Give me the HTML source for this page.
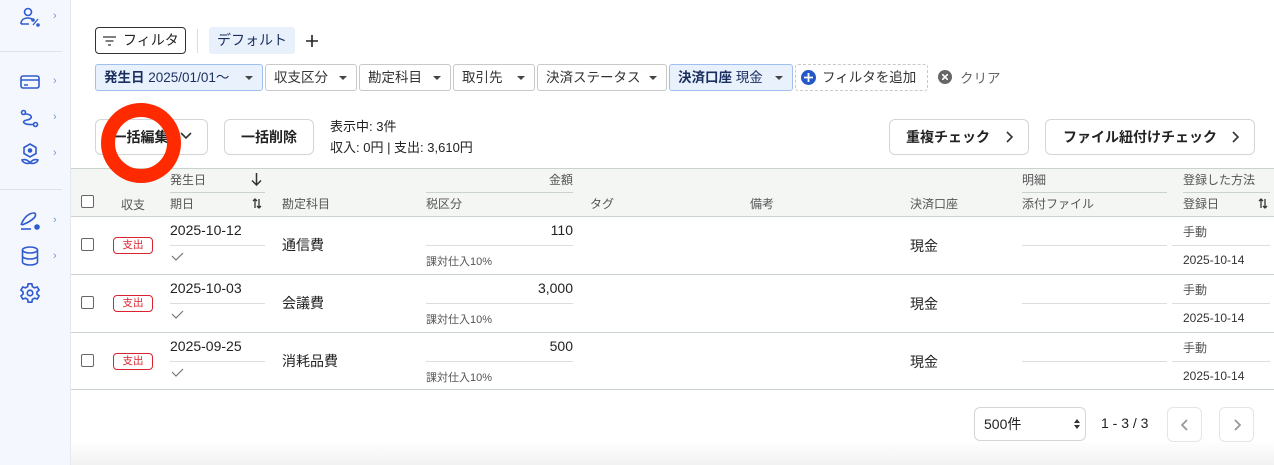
<!DOCTYPE html>
<html><head><meta charset="utf-8"><style>
*{box-sizing:border-box;margin:0;padding:0}
body{width:1274px;height:465px;overflow:hidden;background:#fff;font-family:"Liberation Sans","Noto Sans CJK JP",sans-serif;color:#222;position:relative;font-size:13px}
.a{position:absolute}
.side{left:0;top:0;width:71px;height:465px;background:#f4f7fd;border-right:1px solid #e3e8f0}
.hr{height:1px;background:#dde3ec;left:0;width:62px}
.chev{color:#7a93c9;font-size:11px;left:53px}
.chip{position:absolute;top:64px;height:27px;border:1px solid #c9c9c9;border-radius:3px;font-size:13.5px;line-height:25px;padding-left:8px;color:#333;background:#fff}
.chip.b{background:#e9f1fd;border-color:#9fc0ef;color:#1b2f5e}
.tri{position:absolute;right:9px;top:11px;border-left:4px solid transparent;border-right:4px solid transparent;border-top:4px solid #444}
.btn{position:absolute;border:1px solid #d5d5d5;border-radius:6px;background:#fff;font-weight:bold;font-size:14px;text-align:center}
.th{font-size:12px;color:#555}
.cb{width:13px;height:13px;border:1.5px solid #666;border-radius:2px;background:#fff}
.tag{width:40px;height:17px;border:1px solid #d9232e;border-radius:4px;color:#d9232e;font-size:10.5px;text-align:center;line-height:15px}
.ln{height:1px;background:#ddd}
.row{font-size:14px}
.sm{font-size:11px;color:#555}
</style></head><body>
<div class="a side">
 <svg class="a" style="left:19px;top:7px" width="24" height="22" viewBox="0 0 24 22" fill="none" stroke="#2f5bd0" stroke-width="1.6"><circle cx="9" cy="5" r="3.5"/><path d="M2 17c0-4 3-6 7-6 2 0 3 .5 4 1M2 17h8"/><path d="M14 18l5-6" stroke-width="1.3"/><circle cx="14" cy="13" r="1"/><circle cx="19" cy="18" r="1"/></svg>
 <div class="a chev" style="top:10px">›</div>
 <div class="a hr" style="top:51px"></div>
 <svg class="a" style="left:20px;top:74px" width="20" height="16" viewBox="0 0 20 16" fill="none" stroke="#2f5bd0" stroke-width="1.6"><rect x="1" y="2" width="18" height="12" rx="2"/><path d="M1 6h18M4 11h4"/></svg>
 <div class="a chev" style="top:75px">›</div>
 <svg class="a" style="left:20px;top:109px" width="20" height="20" viewBox="0 0 20 20" fill="none" stroke="#2f5bd0" stroke-width="1.6"><circle cx="3.5" cy="3.5" r="2"/><circle cx="15.5" cy="15.5" r="2"/><path d="M5 5c8 0 8 5 2 6s-4 5 6 4.5"/></svg>
 <div class="a chev" style="top:111px">›</div>
 <svg class="a" style="left:20px;top:143px" width="20" height="22" viewBox="0 0 20 22" fill="none" stroke="#2f5bd0" stroke-width="1.6"><path d="M10 1l6 3.5v6L10 14l-6-3.5v-6z"/><circle cx="10" cy="7.5" r="1.5" fill="#2f5bd0"/><path d="M10 20c-2-3-5-4-8-3 1 3 5 4 8 3zM10 20c2-3 5-4 8-3-1 3-5 4-8 3z"/></svg>
 <div class="a chev" style="top:147px">›</div>
 <div class="a hr" style="top:189px"></div>
 <svg class="a" style="left:19px;top:210px" width="24" height="22" viewBox="0 0 24 22" fill="none" stroke="#2f5bd0" stroke-width="1.6"><path d="M2 15c3-8 8-12 13-12 2 0 2 3 0 5-3 3-7 5-12 7"/><path d="M2 19h10"/><circle cx="18" cy="17" r="2" fill="#2f5bd0"/></svg>
 <div class="a chev" style="top:214px">›</div>
 <svg class="a" style="left:21px;top:246px" width="18" height="20" viewBox="0 0 18 20" fill="none" stroke="#2f5bd0" stroke-width="1.6"><ellipse cx="9" cy="4" rx="7.5" ry="3"/><path d="M1.5 4v12c0 1.7 3.4 3 7.5 3s7.5-1.3 7.5-3V4M1.5 10c0 1.7 3.4 3 7.5 3s7.5-1.3 7.5-3"/></svg>
 <div class="a chev" style="top:250px">›</div>
 <svg class="a" style="left:19px;top:282px" width="22" height="22" viewBox="0 0 24 24" fill="none" stroke="#2f5bd0" stroke-width="1.8"><circle cx="12" cy="12" r="3"/><path d="M10 2h4l.6 3 2.4 1.4 2.9-1 2 3.4-2.3 2v2.4l2.3 2-2 3.4-2.9-1L14.6 19l-.6 3h-4l-.6-3L7 17.6l-2.9 1-2-3.4 2.3-2v-2.4l-2.3-2 2-3.4 2.9 1L9.4 5z"/></svg>
</div>

<div class="a" style="left:95px;top:27px;width:91px;height:27px;border:1px solid #333;border-radius:4px;font-size:14px;line-height:25px;padding-left:27px">フィルタ</div>
<svg class="a" style="left:103px;top:36px" width="13" height="10" fill="none" stroke="#333" stroke-width="1.3"><path d="M0 1h13M2.5 5h8M5 9h3"/></svg>
<div class="a" style="left:197px;top:29px;width:1px;height:24px;background:#ddd"></div>
<div class="a" style="left:209px;top:27px;width:86px;height:27px;background:#e8f0fb;border-radius:3px;font-size:14px;line-height:27px;text-align:center;color:#1b2f5e">デフォルト</div>
<svg class="a" style="left:306px;top:35px" width="12" height="12" stroke="#222" stroke-width="1.6"><path d="M6 0v12M0 6h12"/></svg>

<div class="chip b" style="left:95px;width:168px;font-weight:bold">発生日 <span style="font-weight:normal">2025/01/01〜</span><i class="tri"></i></div>
<div class="chip" style="left:265px;width:92px">収支区分<i class="tri"></i></div>
<div class="chip" style="left:359px;width:92px">勘定科目<i class="tri"></i></div>
<div class="chip" style="left:453px;width:82px">取引先<i class="tri"></i></div>
<div class="chip" style="left:537px;width:130px">決済ステータス<i class="tri"></i></div>
<div class="chip b" style="left:669px;width:124px"><b>決済口座</b> 現金<i class="tri"></i></div>
<div class="chip" style="left:795px;width:133px;border-style:dashed;padding-left:26px">フィルタを追加</div>
<div class="a" style="left:801px;top:70px;width:15px;height:15px;border-radius:50%;background:#2458c6"></div>
<svg class="a" style="left:804px;top:73px" width="9" height="9" stroke="#fff" stroke-width="1.8"><path d="M4.5 0v9M0 4.5h9"/></svg>
<div class="a" style="left:938px;top:70px;width:14px;height:14px;border-radius:50%;background:#666"></div>
<svg class="a" style="left:942px;top:74px" width="6" height="6" stroke="#fff" stroke-width="1.6"><path d="M0 0l6 6M6 0L0 6"/></svg>
<div class="a" style="left:960px;top:67px;font-size:13.5px;color:#666">クリア</div>

<div class="btn" style="left:95px;top:119px;width:113px;height:36px;line-height:34px;padding-right:22px">一括編集</div>
<svg class="a" style="left:180px;top:132px" width="12" height="8" fill="none" stroke="#333" stroke-width="1.6"><path d="M1 1l5 5 5-5"/></svg>
<div class="btn" style="left:224px;top:119px;width:90px;height:36px;line-height:34px">一括削除</div>
<div class="a" style="left:330px;top:116px;font-size:13px;line-height:21px">表示中: 3件<br>収入: 0円 | 支出: 3,610円</div>
<div class="btn" style="left:889px;top:119px;width:140px;height:36px;line-height:34px;text-align:left;padding-left:16px">重複チェック</div>
<svg class="a" style="left:1006px;top:131px" width="7" height="12" fill="none" stroke="#333" stroke-width="1.6"><path d="M1 1l5 5-5 5"/></svg>
<div class="btn" style="left:1045px;top:119px;width:210px;height:36px;line-height:34px;text-align:left;padding-left:17px">ファイル紐付けチェック</div>
<svg class="a" style="left:1232px;top:131px" width="7" height="12" fill="none" stroke="#333" stroke-width="1.6"><path d="M1 1l5 5-5 5"/></svg>

<!-- table -->
<div class="a" style="left:71px;top:168px;width:1203px;height:49px;background:#f3f6f3;border-top:1px solid #c9d2cc;border-bottom:1px solid #c9d2cc"></div>
<div class="a cb" style="left:81px;top:195px"></div>
<div class="a th" style="left:121px;top:196px">収支</div>
<div class="a th" style="left:170px;top:171px">発生日</div>
<svg class="a" style="left:251px;top:173px" width="11" height="13" fill="none" stroke="#333" stroke-width="1.5"><path d="M5.5 0v12M1 7.5l4.5 4.5 4.5-4.5"/></svg>
<div class="a ln" style="left:170px;top:192px;width:95px;background:#c9d2cc"></div>
<div class="a th" style="left:170px;top:195px">期日</div>
<svg class="a" style="left:252px;top:198px" width="10" height="11" fill="none" stroke="#333" stroke-width="1.3"><path d="M3 10V1M1 3l2-2 2 2M7 1v9M5 8l2 2 2-2"/></svg>
<div class="a th" style="left:282px;top:195px">勘定科目</div>
<div class="a th" style="left:426px;top:171px;width:147px;text-align:right">金額</div>
<div class="a ln" style="left:426px;top:192px;width:147px;background:#c9d2cc"></div>
<div class="a th" style="left:426px;top:195px">税区分</div>
<div class="a th" style="left:590px;top:195px">タグ</div>
<div class="a th" style="left:750px;top:195px">備考</div>
<div class="a th" style="left:910px;top:195px">決済口座</div>
<div class="a th" style="left:1022px;top:171px">明細</div>
<div class="a ln" style="left:1022px;top:192px;width:145px;background:#c9d2cc"></div>
<div class="a th" style="left:1022px;top:195px">添付ファイル</div>
<div class="a th" style="left:1183px;top:171px">登録した方法</div>
<div class="a ln" style="left:1183px;top:192px;width:87px;background:#c9d2cc"></div>
<div class="a th" style="left:1183px;top:195px">登録日</div>
<svg class="a" style="left:1258px;top:198px" width="10" height="11" fill="none" stroke="#333" stroke-width="1.3"><path d="M3 10V1M1 3l2-2 2 2M7 1v9M5 8l2 2 2-2"/></svg>

<!-- rows -->
<div class="a" style="left:0;top:217px">
<div class="a" style="left:0;top:0;width:1274px">
<div class="a cb" style="left:81px;top:21px"></div>
<div class="a tag" style="left:113px;top:20px">支出</div>
<div class="a row" style="left:170px;top:5px">2025-10-12</div>
<div class="a ln" style="left:170px;top:28px;width:95px"></div>
<svg class="a" style="left:171px;top:35px" width="13" height="9" fill="none" stroke="#777" stroke-width="1.2"><path d="M1 4l4 4 7-7"/></svg>
<div class="a row" style="left:282px;top:18px">通信費</div>
<div class="a row" style="left:426px;top:5px;width:147px;text-align:right">110</div>
<div class="a ln" style="left:426px;top:28px;width:147px"></div>
<div class="a sm" style="left:426px;top:36px">課対仕入10%</div>
<div class="a row" style="left:910px;top:19px">現金</div>
<div class="a ln" style="left:1022px;top:28px;width:145px"></div>
<div class="a sm" style="left:1183px;top:6px;font-size:12px">手動</div>
<div class="a ln" style="left:1172px;top:28px;width:98px"></div>
<div class="a sm" style="left:1183px;top:36px;font-size:12px;color:#333">2025-10-14</div>
<div class="a ln" style="left:71px;top:57px;width:1203px;background:#c9d2cc"></div>
</div>
<div class="a" style="left:0;top:58px;width:1274px">
<div class="a cb" style="left:81px;top:21px"></div>
<div class="a tag" style="left:113px;top:20px">支出</div>
<div class="a row" style="left:170px;top:5px">2025-10-03</div>
<div class="a ln" style="left:170px;top:28px;width:95px"></div>
<svg class="a" style="left:171px;top:35px" width="13" height="9" fill="none" stroke="#777" stroke-width="1.2"><path d="M1 4l4 4 7-7"/></svg>
<div class="a row" style="left:282px;top:18px">会議費</div>
<div class="a row" style="left:426px;top:5px;width:147px;text-align:right">3,000</div>
<div class="a ln" style="left:426px;top:28px;width:147px"></div>
<div class="a sm" style="left:426px;top:36px">課対仕入10%</div>
<div class="a row" style="left:910px;top:19px">現金</div>
<div class="a ln" style="left:1022px;top:28px;width:145px"></div>
<div class="a sm" style="left:1183px;top:6px;font-size:12px">手動</div>
<div class="a ln" style="left:1172px;top:28px;width:98px"></div>
<div class="a sm" style="left:1183px;top:36px;font-size:12px;color:#333">2025-10-14</div>
<div class="a ln" style="left:71px;top:57px;width:1203px;background:#c9d2cc"></div>
</div>
<div class="a" style="left:0;top:116px;width:1274px">
<div class="a cb" style="left:81px;top:21px"></div>
<div class="a tag" style="left:113px;top:20px">支出</div>
<div class="a row" style="left:170px;top:5px">2025-09-25</div>
<div class="a ln" style="left:170px;top:28px;width:95px"></div>
<svg class="a" style="left:171px;top:35px" width="13" height="9" fill="none" stroke="#777" stroke-width="1.2"><path d="M1 4l4 4 7-7"/></svg>
<div class="a row" style="left:282px;top:18px">消耗品費</div>
<div class="a row" style="left:426px;top:5px;width:147px;text-align:right">500</div>
<div class="a ln" style="left:426px;top:28px;width:147px"></div>
<div class="a sm" style="left:426px;top:36px">課対仕入10%</div>
<div class="a row" style="left:910px;top:19px">現金</div>
<div class="a ln" style="left:1022px;top:28px;width:145px"></div>
<div class="a sm" style="left:1183px;top:6px;font-size:12px">手動</div>
<div class="a ln" style="left:1172px;top:28px;width:98px"></div>
<div class="a sm" style="left:1183px;top:36px;font-size:12px;color:#333">2025-10-14</div>
<div class="a ln" style="left:71px;top:56px;width:1203px;background:#c9d2cc"></div>
</div>
</div>

<!-- pagination -->
<div class="a" style="left:71px;top:440px;width:1203px;height:25px;background:linear-gradient(#fff,#f2f2f2)"></div>
<div class="a" style="left:974px;top:407px;width:112px;height:34px;border:1px solid #d5d5d5;border-radius:6px;font-size:14px;line-height:32px;padding-left:9px;background:#fff">500件</div>
<svg class="a" style="left:1074px;top:419px" width="6" height="10" fill="#333"><path d="M0 4L3 0 6 4zM0 6l3 4 3-4z"/></svg>
<div class="a" style="left:1101px;top:415px;font-size:14px">1 - 3 / 3</div>
<div class="a" style="left:1167px;top:407px;width:35px;height:35px;border:1px solid #e5e5e5;border-radius:6px;background:#fff"></div>
<svg class="a" style="left:1181px;top:419px" width="7" height="12" fill="none" stroke="#999" stroke-width="1.8"><path d="M6 1L1 6l5 5"/></svg>
<div class="a" style="left:1219px;top:407px;width:35px;height:35px;border:1px solid #e5e5e5;border-radius:6px;background:#fff"></div>
<svg class="a" style="left:1234px;top:419px" width="7" height="12" fill="none" stroke="#999" stroke-width="1.8"><path d="M1 1l5 5-5 5"/></svg>

<!-- red circle annotation -->
<div class="a" style="left:101px;top:103px;width:80px;height:80px;border:14px solid #ff2a00;border-radius:50%"></div>
</body></html>
